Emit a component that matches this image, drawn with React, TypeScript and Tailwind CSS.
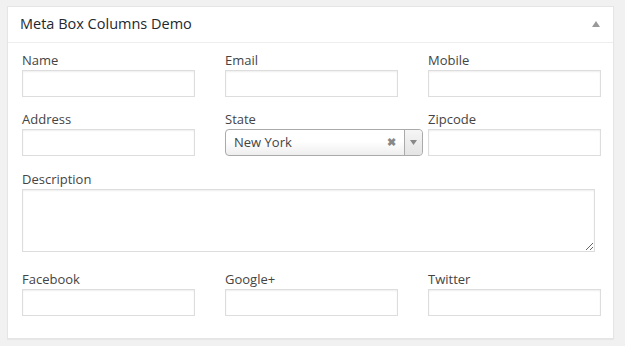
import { ReactNode } from "react";

const Field = ({ label, children }: { label: string; children: ReactNode }) => (
  <div className="flex flex-col">
    <label className="mb-px h-[17px] text-[13px] leading-[17px] text-[#444]">
      {label}
    </label>
    {children}
  </div>
);

const TextInput = () => (
  <input
    type="text"
    className="h-[27px] w-[173px] border border-[#ddd] bg-white px-[5px] text-[13px] shadow-[inset_0_1px_2px_rgba(0,0,0,0.07)] outline-none"
  />
);

const StateSelect = () => (
  <div className="flex h-[27px] w-[198px] items-stretch rounded-[4px] border border-[#aaa] bg-[linear-gradient(to_bottom,#fff_0%,#fff_45%,#eee_100%)] text-[13px] text-[#444]">
    <span className="flex flex-1 items-center pl-[8px] leading-none">New York</span>
    <span className="flex w-[26px] items-center justify-center text-[11px] font-bold text-[#888]">
      ✖
    </span>
    <span className="flex w-[18px] items-center justify-center rounded-r-[4px] border-l border-[#aaa] bg-[linear-gradient(to_bottom,#f5f5f5,#e4e4e4)]">
      <svg width="7" height="5" viewBox="0 0 7 5">
        <path d="M0 0h7L3.5 5z" fill="#888" />
      </svg>
    </span>
  </div>
);

export default function App() {
  return (
    <div className="h-[346px] w-[625px] bg-[#f1f1f1] pt-[6px] pl-[7px] font-['Open_Sans',sans-serif]">
      <div className="w-[607px] border border-[#e5e5e5] bg-white shadow-[0_1px_1px_rgba(0,0,0,0.04)]">
        <div className="flex h-[36px] items-center justify-between border-b border-[#eee] pr-[13px] pl-[12px]">
          <h2 className="text-[14.5px] leading-none text-[#23282d]">Meta Box Columns Demo</h2>
          <svg width="8" height="6" viewBox="0 0 8 6" className="mb-[2px]">
            <path d="M4 0l4 6H0z" fill="#999" />
          </svg>
        </div>
        <div className="flex flex-col pt-[9px] pr-[11px] pb-[22px] pl-[14px]">
          <div className="grid grid-cols-[173px_173px_173px] gap-x-[30px]">
            <Field label="Name">
              <TextInput />
            </Field>
            <Field label="Email">
              <TextInput />
            </Field>
            <Field label="Mobile">
              <TextInput />
            </Field>
          </div>
          <div className="mt-[14px] grid grid-cols-[173px_173px_173px] gap-x-[30px]">
            <Field label="Address">
              <TextInput />
            </Field>
            <Field label="State">
              <StateSelect />
            </Field>
            <Field label="Zipcode">
              <TextInput />
            </Field>
          </div>
          <div className="mt-[15px]">
            <Field label="Description">
              <textarea className="block h-[63px] w-[573px] resize border border-[#ddd] bg-white p-[5px] text-[13px] shadow-[inset_0_1px_2px_rgba(0,0,0,0.07)] outline-none" />
            </Field>
          </div>
          <div className="mt-[19px] grid grid-cols-[173px_173px_173px] gap-x-[30px]">
            <Field label="Facebook">
              <TextInput />
            </Field>
            <Field label="Google+">
              <TextInput />
            </Field>
            <Field label="Twitter">
              <TextInput />
            </Field>
          </div>
        </div>
      </div>
    </div>
  );
}
